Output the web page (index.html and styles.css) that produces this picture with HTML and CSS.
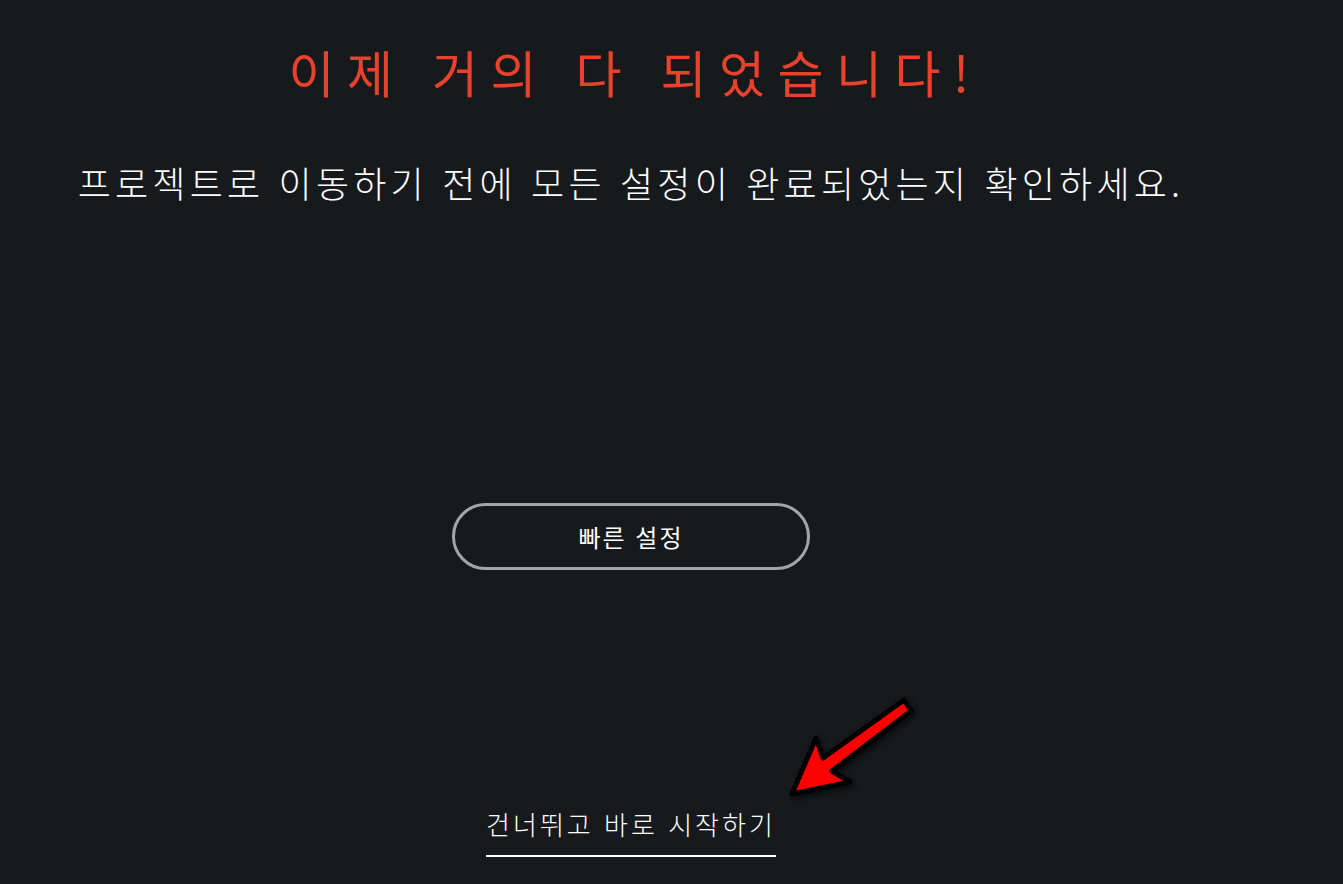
FILE: index.html
```html
<!DOCTYPE html>
<html lang="ko">
<head>
<meta charset="utf-8">
<link rel="stylesheet" href="styles.css">
</head>
<body>
<main class="page">
  <h1 class="title">이제 거의 다 되었습니다!</h1>
  <p class="subtitle">프로젝트로 이동하기 전에 모든 설정이 완료되었는지 확인하세요.</p>
  <div class="actions">
    <button class="quick">빠른 설정</button>
  </div>
  <div class="skip-wrap">
    <a class="skip" href="#">건너뛰고 바로 시작하기</a>
  </div>
</main>
<svg class="arrow" width="140" height="120" viewBox="0 0 140 120">
  <path d="M124 8 L43 66 L36 46 L12 102 L70 90 L52 79 L131 19 Z" fill="#ff0000" stroke="#000" stroke-width="5" stroke-linejoin="round"/>
</svg>
</body>
</html>
```
FILE: styles.css
```css
html, body {
  margin: 0;
  padding: 0;
  background: #161a1d;
  height: 100%;
}
body {
  font-family: "Noto Sans CJK KR", "Noto Sans", sans-serif;
  color: #ffffff;
  position: relative;
  overflow: hidden;
}
.page {
  width: 1262px;
  display: flex;
  flex-direction: column;
  align-items: center;
}
.title {
  margin: 35px 0 0;
  font-size: 50px;
  font-weight: 400;
  color: #e8412c;
  letter-spacing: 12.5px;
  line-height: 72px;
  padding-left: 8px;
}
.subtitle {
  margin: 50px 0 0;
  font-size: 36px;
  font-weight: 300;
  letter-spacing: 4.2px;
  line-height: 50px;
}
.actions {
  margin-top: 296px;
}
.quick {
  width: 358px;
  height: 67px;
  border: 3px solid #a3a5a7;
  border-radius: 34px;
  background: transparent;
  color: #fff;
  font-family: inherit;
  font-size: 24px;
  font-weight: 400;
  letter-spacing: 2px;
  cursor: pointer;
}
.skip-wrap {
  margin-top: 236px;
}
.skip {
  display: inline-block;
  color: #fff;
  text-decoration: none;
  font-size: 26px;
  font-weight: 300;
  letter-spacing: 3px;
  line-height: 36px;
  padding-bottom: 13px;
  border-bottom: 2px solid #fff;
}
.arrow {
  position: absolute;
  left: 780px;
  top: 692px;
  filter: drop-shadow(2px 3px 3px rgba(0,0,0,0.6));
}
```
